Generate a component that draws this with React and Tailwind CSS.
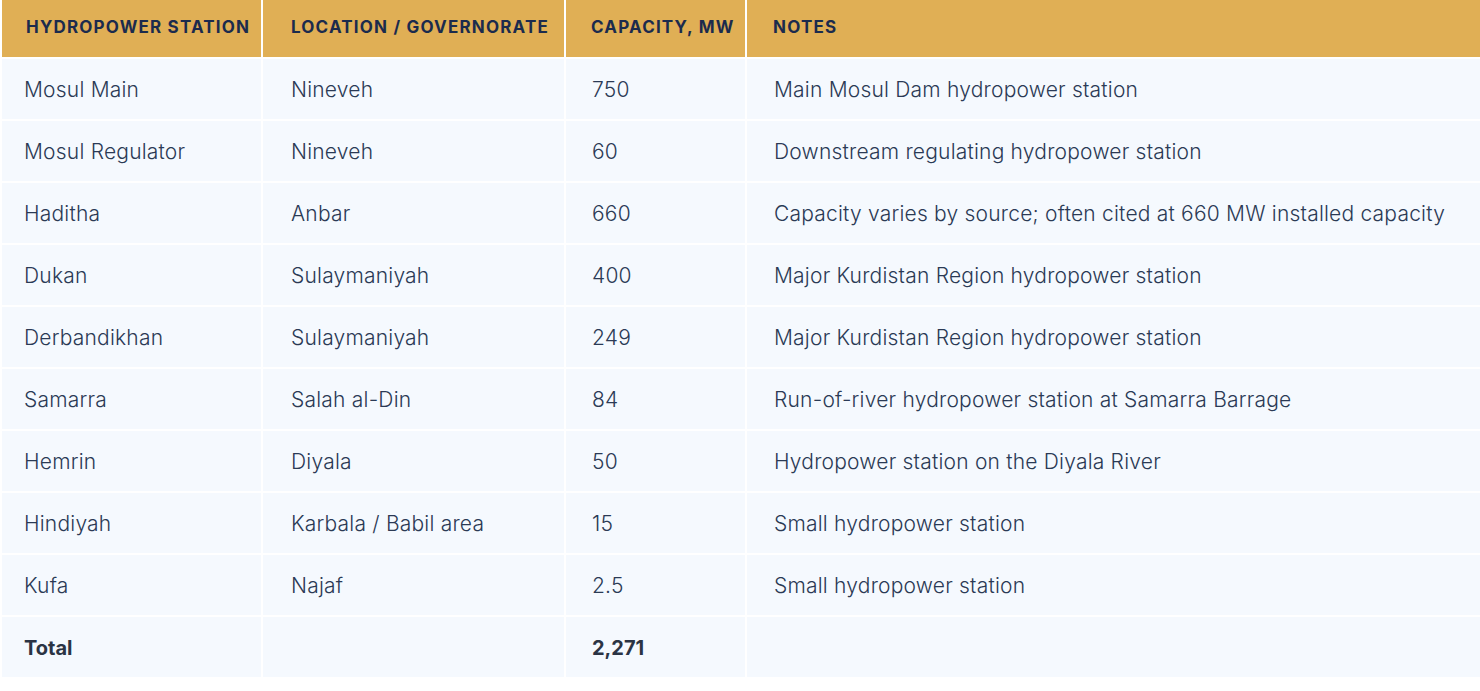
import React from 'react';

const rows=[
  ['Mosul Main','Nineveh','750','Main Mosul Dam hydropower station'],
  ['Mosul Regulator','Nineveh','60','Downstream regulating hydropower station'],
  ['Haditha','Anbar','660','Capacity varies by source; often cited at 660 MW installed capacity'],
  ['Dukan','Sulaymaniyah','400','Major Kurdistan Region hydropower station'],
  ['Derbandikhan','Sulaymaniyah','249','Major Kurdistan Region hydropower station'],
  ['Samarra','Salah al-Din','84','Run-of-river hydropower station at Samarra Barrage'],
  ['Hemrin','Diyala','50','Hydropower station on the Diyala River'],
  ['Hindiyah','Karbala / Babil area','15','Small hydropower station'],
  ['Kufa','Najaf','2.5','Small hydropower station'],
];

const pads=['pl-[22px]','pl-[28px]','pl-[26px]','pl-[27px]'];
const headPads=['pl-[24px]','pl-[28px]','pl-[25px]','pl-[26px]'];

const App=()=>{
  return(
    <div className="bg-white pl-[2px] font-['Inter',sans-serif]">
      <div className="grid grid-cols-[259px_301px_179px_1fr] gap-[2px]">
        {['Hydropower Station','Location / Governorate','Capacity, MW','Notes'].map((h,i)=>(
          <div key={h} className={`h-[57px] flex items-center pb-[1px] bg-[#e0af55] ${headPads[i]} text-[17px] font-bold uppercase tracking-[0.07em] text-[#1b2b4d] whitespace-nowrap`}>{h}</div>
        ))}
        {rows.map((r)=>r.map((c,i)=>(
          <div key={r[0]+i} className={`h-[60px] flex items-center pt-[2px] bg-[#f5f9fe] ${pads[i]} text-[21px] font-light tracking-[0.01em] text-[#2b3a55] whitespace-nowrap`}>{c}</div>
        )))}
        {['Total','','2,271',''].map((c,i)=>(
          <div key={'t'+i} className={`h-[60px] flex items-center pt-[2px] bg-[#f5f9fe] ${pads[i]} text-[20px] font-bold text-[#2b3444]`}>{c}</div>
        ))}
      </div>
    </div>
  );
};

export default App;
